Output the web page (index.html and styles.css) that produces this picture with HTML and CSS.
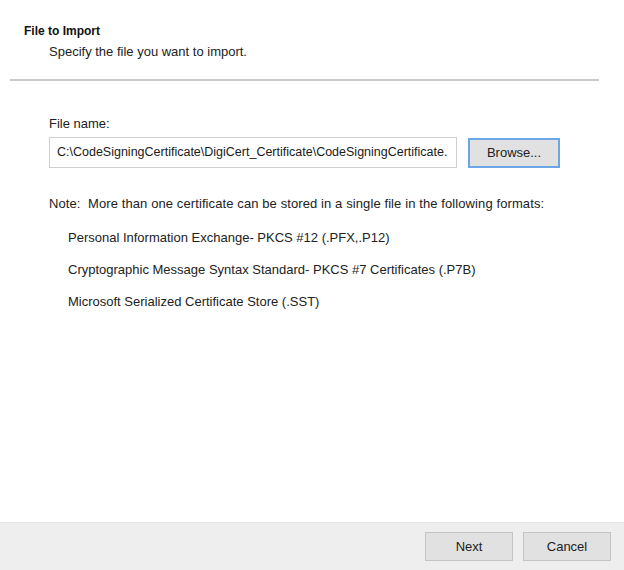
FILE: index.html
```html
<!DOCTYPE html>
<html lang="en">
<head>
    <meta charset="UTF-8">
    <title>Certificate Import Wizard</title>
    <link rel="stylesheet" href="styles.css">
</head>
<body>
    <div class="wizard">
        <div class="header">
            <h1>File to Import</h1>
            <p class="subtitle">Specify the file you want to import.</p>
        </div>
        <div class="divider"></div>

        <div class="content">
            <label class="field-label" for="file-name">File name:</label>
            <div class="file-row">
                <div class="file-input" id="file-name">C:\CodeSigningCertificate\DigiCert_Certificate\CodeSigningCertificate.</div>
                <button class="btn btn-browse">Browse...</button>
            </div>

            <p class="note">Note:&nbsp; More than one certificate can be stored in a single file in the following formats:</p>
            <ul class="formats">
                <li>Personal Information Exchange- PKCS #12 (.PFX,.P12)</li>
                <li>Cryptographic Message Syntax Standard- PKCS #7 Certificates (.P7B)</li>
                <li>Microsoft Serialized Certificate Store (.SST)</li>
            </ul>
        </div>

        <div class="footer">
            <button class="btn">Next</button>
            <button class="btn">Cancel</button>
        </div>
    </div>
</body>
</html>
```
FILE: styles.css
```css
body {
    margin: 0;
    background-color: #ffffff;
    font-family: 'Liberation Sans', Arial, sans-serif;
    font-size: 13px;
    color: #222222;
}
.wizard {
    height: 100vh;
    display: flex;
    flex-direction: column;
}
.header {
    padding: 24px 0 0 24px;
}
h1 {
    margin: 0;
    font-size: 12px;
    font-weight: bold;
    color: #111111;
}
.subtitle {
    margin: 6px 0 0 25px;
}
.divider {
    height: 2px;
    background-color: #cacaca;
    margin: 20px 25px 0 10px;
}
.content {
    flex: 1;
    padding: 35px 0 0 49px;
}
.field-label {
    display: block;
}
.file-row {
    display: flex;
    align-items: center;
    gap: 11px;
    margin-top: 6px;
}
.file-input {
    width: 399px;
    height: 29px;
    line-height: 29px;
    padding-left: 7px;
    border: 1px solid #cfcfcf;
    white-space: nowrap;
    overflow: hidden;
    font-size: 12.5px;
    color: #1a1a1a;
}
.btn {
    font-family: inherit;
    font-size: 13px;
    color: #222222;
    background-color: #e1e1e1;
    border: 1px solid #c4c4c4;
    width: 88px;
    height: 29px;
    padding: 0;
}
.btn-browse {
    width: 92px;
    height: 30px;
    border: 2px solid #6aa7e4;
}
.note {
    margin: 28px 0 0 0;
    letter-spacing: 0.1px;
}
.formats {
    list-style-type: none;
    margin: 0;
    padding: 2px 0 0 19px;
}
.formats li {
    margin-top: 17px;
}
.footer {
    height: 48px;
    background-color: #eeeeee;
    border-top: 1px solid #e4e4e4;
    display: flex;
    justify-content: flex-end;
    align-items: center;
    gap: 10px;
    padding-right: 13px;
    box-sizing: border-box;
}
```
